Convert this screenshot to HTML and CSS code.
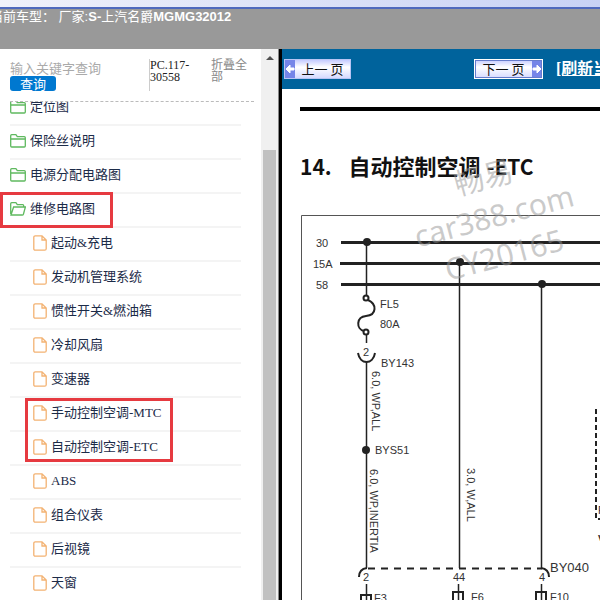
FILE: index.html
```html
<!DOCTYPE html>
<html lang="zh-CN">
<head>
    <meta charset="UTF-8">
    <meta name="viewport" content="width=device-width, initial-scale=1.0">
    <title>维修电路图</title>
    <link rel="stylesheet" href="styles.css">
</head>
<body>
    <svg class="symbols" aria-hidden="true">
        <symbol id="folder" viewBox="0 0 16 14">
            <path d="M.7 12V1.7q0-1 1-1h4.2l1.4 2h7q1 0 1 1V12q0 1-1 1H1.7q-1 0-1-1zM.7 5h14.6"/>
        </symbol>
        <symbol id="folder-open" viewBox="0 0 16 14">
            <path d="M.7 12V1.7q0-1 1-1h4.2l1.4 2h5.4q1 0 1 1V5M1 13l2.600-8h11.8l-2 7.2q-.3.8-1.2.8z"/>
        </symbol>
        <symbol id="file" viewBox="0 0 14 16">
            <path d="M2.300.8H9L13.200 5v8.700q0 1.500-1.500 1.500H2.300q-1.500 0-1.500-1.500V2.300Q.8.8 2.300.8zM9 .8V5h4.200"/>
        </symbol>
    </svg>

    <div class="window-edge"></div>
    <header class="header">当前车型：&nbsp;厂家:<b>S-</b>上汽名爵<b>MGMG32012</b></header>

    <div class="main">
        <aside class="sidebar">
            <div class="sidebar-content">
                <form class="search">
                    <div class="search-field">
                        <input type="text" aria-label="关键字" placeholder="输入关键字查询">
                        <button type="button">查询</button>
                    </div>
                    <div class="code">PC.117-30558</div>
                    <a href="#" class="collapse">折叠全部</a>
                </form>
                <nav class="tree-wrap">
                    <ul class="tree">
                        <li><a href="#"><svg class="folder"><use href="#folder"/></svg>定位图</a></li>
                        <li><a href="#"><svg class="folder"><use href="#folder"/></svg>保险丝说明</a></li>
                        <li><a href="#"><svg class="folder"><use href="#folder"/></svg>电源分配电路图</a></li>
                        <li class="mark mark-folder"><a href="#"><svg class="folder"><use href="#folder-open"/></svg>维修电路图</a></li>
                    </ul>
                    <ul class="tree files">
                        <li><a href="#"><svg class="file"><use href="#file"/></svg>起动&amp;充电</a></li>
                        <li><a href="#"><svg class="file"><use href="#file"/></svg>发动机管理系统</a></li>
                        <li><a href="#"><svg class="file"><use href="#file"/></svg>惯性开关&amp;燃油箱</a></li>
                        <li><a href="#"><svg class="file"><use href="#file"/></svg>冷却风扇</a></li>
                        <li><a href="#"><svg class="file"><use href="#file"/></svg>变速器</a></li>
                    </ul>
                    <ul class="tree files mark mark-files">
                        <li><a href="#"><svg class="file"><use href="#file"/></svg>手动控制空调-MTC</a></li>
                        <li><a href="#"><svg class="file"><use href="#file"/></svg>自动控制空调-ETC</a></li>
                    </ul>
                    <ul class="tree files">
                        <li><a href="#"><svg class="file"><use href="#file"/></svg>ABS</a></li>
                        <li><a href="#"><svg class="file"><use href="#file"/></svg>组合仪表</a></li>
                        <li><a href="#"><svg class="file"><use href="#file"/></svg>后视镜</a></li>
                        <li><a href="#"><svg class="file"><use href="#file"/></svg>天窗</a></li>
                    </ul>
                </nav>
            </div>
            <div class="scrollbar">
                <svg class="scroll-up" viewBox="0 0 8 4"><path d="M4 0l4 4H0z"/></svg>
                <div class="thumb"></div>
            </div>
        </aside>

        <main class="viewer">
            <div class="toolbar">
                <button type="button" class="page-btn prev">
                    <svg viewBox="0 0 10 18"><path d="M1 9l4-4v3h4v2H5v3z"/></svg>
                    <span>上一 页</span>
                </button>
                <button type="button" class="page-btn next">
                    <span>下一 页</span>
                    <svg viewBox="0 0 10 18"><path d="M9 9L5 5v3H1v2h4v3z"/></svg>
                </button>
                <a href="#" class="refresh">[刷新当前页]</a>
            </div>
            <article class="document">
                <hr>
                <h1><span>14.</span>自动控制空调<span>-ETC</span></h1>
                <svg class="diagram" viewBox="0 0 300 390">
                    <!-- frame -->
                    <path class="thin" d="M300 5.500H1.500V390"/>
                    <!-- supply lines -->
                    <path class="bus" d="M41 32.500H300M40 53.500H300M41 74.500H300"/>
                    <text x="16" y="37">30</text>
                    <text x="13" y="58">15A</text>
                    <text x="16" y="79">58</text>
                    <!-- wires -->
                    <path class="wire" d="M66.500 32V86M66.500 125V133M66.500 152V358M159.500 53V358M241.500 74V358"/>
                    <circle class="dot" cx="67" cy="32" r="4"/>
                    <circle class="dot" cx="160" cy="52" r="4"/>
                    <circle class="dot" cx="242" cy="74" r="4"/>
                    <circle class="dot" cx="66" cy="240" r="4"/>
                    <!-- fuse FL5 -->
                    <path class="part" d="M68 90C77 94 77 105 66 106C56 107 56 119 64 121"/>
                    <circle class="ring" cx="66" cy="88" r="2.500"/>
                    <circle class="ring" cx="66" cy="122" r="2.500"/>
                    <path class="part" d="M58 143C60 155 73 155 75 143"/>
                    <text x="80" y="98">FL5</text>
                    <text x="80" y="118">80A</text>
                    <text x="63" y="146">2</text>
                    <text x="81" y="157">BY143</text>
                    <text x="75" y="244">BYS51</text>
                    <text transform="translate(72 161) rotate(90)">6.0, WP,ALL</text>
                    <text transform="translate(70 259) rotate(90)">6.0, WP,INERTIA</text>
                    <text transform="translate(167 258) rotate(90)">3.0, W,ALL</text>
                    <!-- connector BY040 -->
                    <path class="dashed" d="M68 358.500H242"/>
                    <path class="part" d="M67 358Q59 359 59 367M241 358Q249 359 249 367"/>
                    <text x="63" y="371">2</text>
                    <text x="153" y="371">44</text>
                    <text x="239" y="371">4</text>
                    <text class="large" x="250" y="362">BY040</text>
                    <path class="wire" d="M66.500 374V390M158.500 374V390M241.500 374V390"/>
                    <path class="part" d="M61 390V385H71V390M153 390V382H163V390M236 390V382H246V390"/>
                    <text x="74" y="392">F3</text>
                    <text x="171" y="391">F6</text>
                    <text x="250" y="391">F10</text>
                    <path class="dotted" d="M296 199V310M298 309H310"/>
                    <text x="298" y="304">F</text>
                    <text class="strong" x="298" y="331">v</text>
                </svg>
                <div class="watermark">畅易<br>car388.com<br>CY20165</div>
            </article>
        </main>
    </div>
</body>
</html>
```

FILE: styles.css
```css
*,
*::after {
    margin: 0;
    padding: 0;
    box-sizing: border-box;
}

body {
    height: 100vh;
    display: flex;
    flex-direction: column;
    overflow: hidden;
    background: #fff;
    font-family: 'Liberation Serif', 'Noto Sans CJK SC', serif;
    font-size: 13px;
}

a {
    color: inherit;
    text-decoration: none;
}

.symbols {
    position: absolute;
    width: 0;
    height: 0;
}

.window-edge {
    flex: none;
    height: 9px;
    background: linear-gradient(90deg, #f0f1fa, #c8d2f5);
    border-bottom: 2px solid #4f69bd;
}

.header {
    flex: none;
    height: 40px;
    background: #999;
    color: #fff;
    font-family: 'Liberation Sans', 'Noto Sans CJK SC', sans-serif;
    line-height: 16px;
    text-indent: -10px;
    white-space: nowrap;
}

.main {
    flex: 1;
    display: flex;
    min-height: 0;
}

/* Sidebar */
.sidebar {
    flex: none;
    width: 282px;
    display: flex;
    border-right: 3px solid #000;
}

.sidebar-content {
    flex: 1;
    display: flex;
    flex-direction: column;
    min-width: 0;
}

.search {
    flex: none;
    display: flex;
    height: 53px;
    margin: 0 7px 0 10px;
    padding-top: 10px;
    border-bottom: 1px dashed #bbb;
    font-size: 12px;
    line-height: 12px;
}

.search-field {
    width: 139px;
    display: flex;
    flex-direction: column;
    align-items: flex-start;
}

.search-field input {
    width: 130px;
    height: 17px;
    padding-top: 3px;
    border: none;
    outline: none;
    font: 13px/14px 'Liberation Serif', 'Noto Sans CJK SC', serif;
}

.search-field input::placeholder {
    color: #aaa;
}

.search-field button {
    width: 46px;
    height: 15px;
    border: none;
    border-radius: 3px;
    background: #0078d0;
    color: #fff;
    font: 13px/14px 'Noto Sans CJK SC', sans-serif;
}

.code {
    width: 62px;
    height: 32px;
    padding-right: 15px;
    border-left: 1px solid #ccc;
    color: #222;
}

.collapse {
    width: 38px;
    color: #888;
}

.tree-wrap {
    flex: 1;
    overflow: hidden;
}

.tree {
    list-style: none;
    margin: 0 20px 0 10px;
}

/* list is scrolled a little below the search bar */
.tree:first-child {
    margin-top: -10px;
}

.tree li {
    height: 34px;
    border-bottom: 2px solid #f4f4f4;
}

.tree a {
    height: 30px;
    display: flex;
    align-items: center;
    gap: 4px;
    color: #1c2b48;
    line-height: 16px;
    white-space: nowrap;
}

.files a {
    padding-left: 23px;
}

.tree svg {
    flex: none;
    fill: none;
}

.folder {
    width: 16px;
    height: 14px;
    stroke: #5fb95f;
    stroke-width: 1.3;
}

.file {
    width: 14px;
    height: 16px;
    stroke: #f3b272;
    stroke-width: 1.3;
}

.mark {
    position: relative;
}

.mark::after {
    content: '';
    position: absolute;
    border: 3px solid #e63a40;
    pointer-events: none;
}

.mark-folder::after {
    top: -2px;
    left: -10px;
    width: 113px;
    height: 36px;
}

.mark-files::after {
    top: 0;
    left: 15px;
    width: 148px;
    height: 64px;
}

.scrollbar {
    flex: none;
    width: 18px;
    display: flex;
    flex-direction: column;
    align-items: center;
    background: #f0f0f0;
    border-right: 1px solid #888;
}

.scroll-up {
    width: 8px;
    height: 4px;
    margin: 7px 0 90px;
    fill: #505050;
}

.thumb {
    flex: 1;
    width: 13px;
    background: #c1c1c1;
}

/* Viewer */
.viewer {
    flex: 1;
    display: flex;
    flex-direction: column;
    min-width: 0;
    overflow: hidden;
}

.toolbar {
    flex: none;
    height: 40px;
    display: flex;
    align-items: center;
    padding-left: 2px;
    background: #00639c;
}

.page-btn {
    flex: none;
    display: flex;
    width: 67px;
    height: 20px;
    border: 1px solid #b8c4f4;
    background: linear-gradient(#c4cbff, #fff 40%, #d5daff);
    color: #111;
    font: 13px/17px 'Noto Sans CJK SC', sans-serif;
}

.page-btn span {
    flex: 1;
    text-align: center;
    white-space: nowrap;
}

.page-btn svg {
    flex: none;
    width: 10px;
    height: 18px;
    background: #7585e8;
    fill: #fff;
    stroke: #fff;
}

.next {
    width: 69px;
    margin: 0 13px 0 123px;
    border-color: #fff;
    outline: 1px solid #667ccc;
    outline-offset: -2px;
}

.refresh {
    color: #fff;
    font: bold 16px/20px 'Liberation Serif', 'Noto Sans CJK SC', serif;
    text-decoration: underline;
    white-space: nowrap;
}

.document {
    flex: 1;
    position: relative;
    padding: 18px 0 0 18px;
    overflow: hidden;
}

.document hr {
    height: 4px;
    border: none;
    background: #000;
}

.document h1 {
    height: 99px;
    padding-top: 38px;
    color: #111;
    font: bold 22px/32px 'Noto Sans CJK SC', sans-serif;
    white-space: nowrap;
}

.document h1 span {
    font-size: 21px;
}

.document h1 span:first-child {
    margin-right: 17px;
}

.document h1 span:last-child {
    margin-left: 6px;
}

.diagram {
    display: block;
    width: 100%;
    fill: none;
    stroke: #222;
}

.diagram text {
    fill: #333;
    stroke: none;
    font: 11px 'Liberation Sans', sans-serif;
}

.diagram .large {
    font-size: 13px;
}

.diagram .strong {
    font-weight: bold;
}

.thin {
    stroke: #555;
}

.bus {
    stroke-width: 3;
}

.wire {
    stroke-width: 1.5;
}

.part,
.dashed,
.dotted {
    stroke-width: 2;
}

.dashed {
    stroke-dasharray: 7 6;
}

.dotted {
    stroke-dasharray: 5 3;
}

.dot {
    fill: #222;
    stroke: none;
}

.ring {
    fill: #fff;
    stroke-width: 2;
}

.watermark {
    position: absolute;
    top: 67px;
    left: 130px;
    color: rgba(150, 150, 150, 0.5);
    font: 30px/40px 'Noto Sans', 'Noto Sans CJK SC', sans-serif;
    text-align: center;
    transform: rotate(-15deg);
    pointer-events: none;
}
```
